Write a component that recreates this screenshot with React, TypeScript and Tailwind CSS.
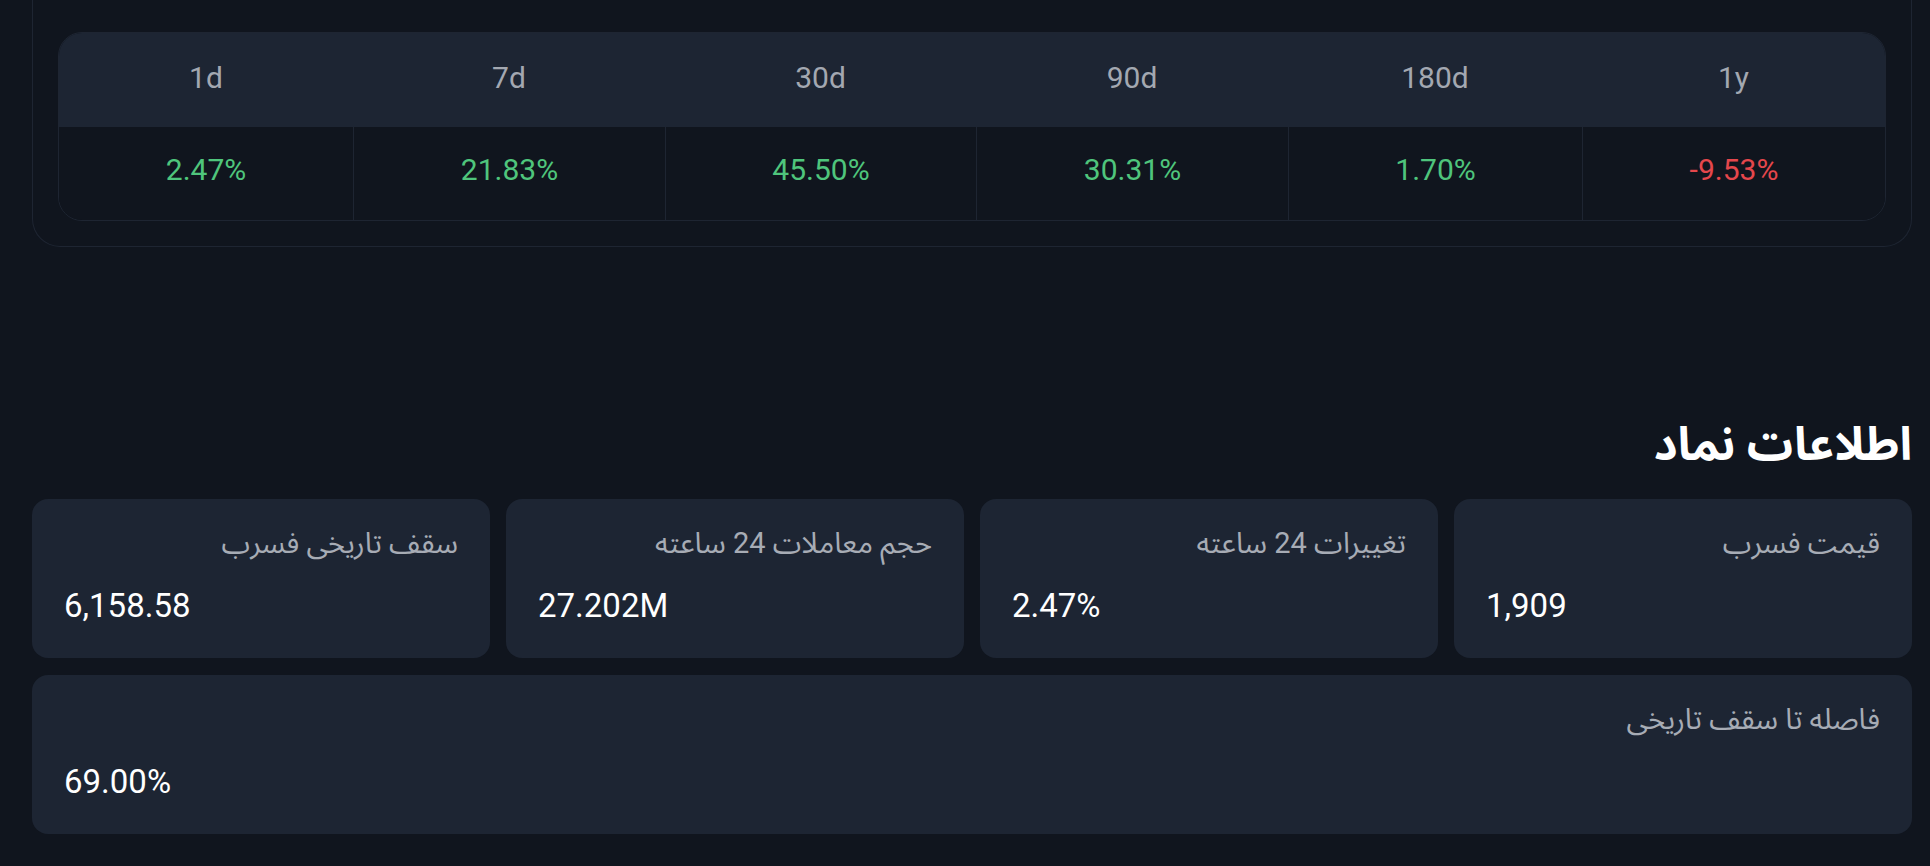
const PERIODS = [
  { label: "1d", value: "2.47%", up: true },
  { label: "7d", value: "21.83%", up: true },
  { label: "30d", value: "45.50%", up: true },
  { label: "90d", value: "30.31%", up: true },
  { label: "180d", value: "1.70%", up: true },
  { label: "1y", value: "-9.53%", up: false },
];

const STATS = [
  { label: "قیمت فسرب", value: "1,909" },
  { label: "تغییرات 24 ساعته", value: "2.47%" },
  { label: "حجم معاملات 24 ساعته", value: "27.202M" },
  { label: "سقف تاریخی فسرب", value: "6,158.58" },
];

function StatCard({ label, value }: { label: string; value: string }) {
  return (
    <div className="flex flex-col rounded-2xl bg-[#1d2533] px-8 pt-8 pb-[34px]">
      <p className="text-right text-[29px] leading-6 text-[#a7acb5]">{label}</p>
      <p dir="ltr" className="mt-[33px] text-left text-[33px] leading-9 text-white">
        {value}
      </p>
    </div>
  );
}

export default function App() {
  return (
    <div className="min-h-screen bg-[#10151e] pr-[18px] pl-8 font-['Roboto','Noto_Sans_Arabic','DejaVu_Sans',sans-serif]">
      {/* performance card, top is scrolled out of view */}
      <section className="rounded-b-[28px] border-x border-b border-[#1e2532] px-[25px] pt-8 pb-[25px]">
        <div className="overflow-hidden rounded-3xl border border-[#1e2532]">
          <div className="grid grid-cols-[294px_312px_311px_312px_294px_1fr] bg-[#1d2533]">
            {PERIODS.map((p) => (
              <div
                key={p.label}
                className="flex h-[94px] items-center justify-center pb-1.5 text-[30px] text-[#a3a8b1]"
              >
                {p.label}
              </div>
            ))}
          </div>
          <div className="grid grid-cols-[294px_312px_311px_312px_294px_1fr] bg-[#10151e]">
            {PERIODS.map((p, i) => (
              <div
                key={p.label}
                className={`flex h-[93px] items-center justify-center pb-2 text-[30px] ${
                  i > 0 ? "border-l border-[#1e2532]" : ""
                } ${p.up ? "text-[#4fc57c]" : "text-[#e5474c]"}`}
              >
                {p.value}
              </div>
            ))}
          </div>
        </div>
      </section>

      <section dir="rtl" className="mt-[177px] pb-8">
        <h2 className="mb-[35px] text-right text-[46px] leading-10 font-bold text-white">
          اطلاعات نماد
        </h2>
        <div className="grid grid-cols-4 gap-4">
          {STATS.map((s) => (
            <StatCard key={s.label} label={s.label} value={s.value} />
          ))}
        </div>
        <div className="mt-[17px]">
          <StatCard label="فاصله تا سقف تاریخی" value="69.00%" />
        </div>
      </section>
    </div>
  );
}
